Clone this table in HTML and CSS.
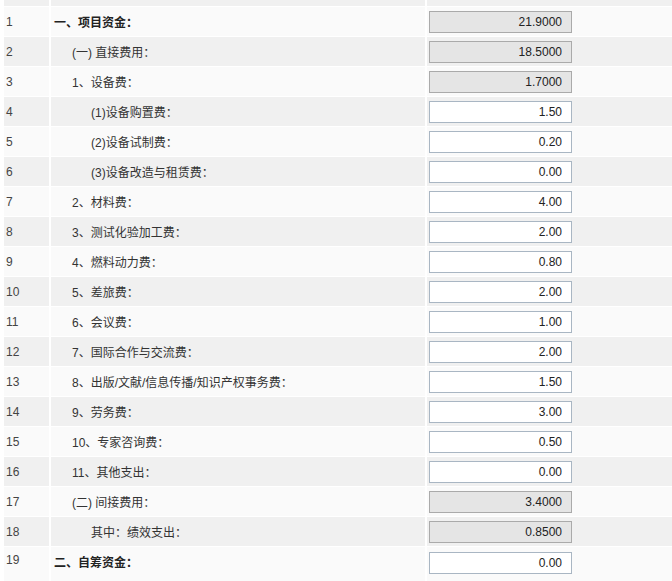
FILE: index.html
```html
<!DOCTYPE html>
<html lang="zh-CN">
<head>
<meta charset="utf-8">
<title>项目资金</title>
<link rel="stylesheet" href="styles.css">
</head>
<body>
<div class="sheet">
  <div class="row row--cut"><div class="cell"></div><div class="cell"></div><div class="cell"></div></div>
  <div class="row"><div class="cell num">1</div><div class="cell label lv0 strong">一、项目资金：</div><div class="cell val"><input class="box ro" readonly value="21.9000"></div></div>
  <div class="row"><div class="cell num">2</div><div class="cell label lv1">(一) 直接费用：</div><div class="cell val"><input class="box ro" readonly value="18.5000"></div></div>
  <div class="row"><div class="cell num">3</div><div class="cell label lv1">1、设备费：</div><div class="cell val"><input class="box ro" readonly value="1.7000"></div></div>
  <div class="row"><div class="cell num">4</div><div class="cell label lv2">(1)设备购置费：</div><div class="cell val"><input class="box" value="1.50"></div></div>
  <div class="row"><div class="cell num">5</div><div class="cell label lv2">(2)设备试制费：</div><div class="cell val"><input class="box" value="0.20"></div></div>
  <div class="row"><div class="cell num">6</div><div class="cell label lv2">(3)设备改造与租赁费：</div><div class="cell val"><input class="box" value="0.00"></div></div>
  <div class="row"><div class="cell num">7</div><div class="cell label lv1">2、材料费：</div><div class="cell val"><input class="box" value="4.00"></div></div>
  <div class="row"><div class="cell num">8</div><div class="cell label lv1">3、测试化验加工费：</div><div class="cell val"><input class="box" value="2.00"></div></div>
  <div class="row"><div class="cell num">9</div><div class="cell label lv1">4、燃料动力费：</div><div class="cell val"><input class="box" value="0.80"></div></div>
  <div class="row"><div class="cell num">10</div><div class="cell label lv1">5、差旅费：</div><div class="cell val"><input class="box" value="2.00"></div></div>
  <div class="row"><div class="cell num">11</div><div class="cell label lv1">6、会议费：</div><div class="cell val"><input class="box" value="1.00"></div></div>
  <div class="row"><div class="cell num">12</div><div class="cell label lv1">7、国际合作与交流费：</div><div class="cell val"><input class="box" value="2.00"></div></div>
  <div class="row"><div class="cell num">13</div><div class="cell label lv1">8、出版/文献/信息传播/知识产权事务费：</div><div class="cell val"><input class="box" value="1.50"></div></div>
  <div class="row"><div class="cell num">14</div><div class="cell label lv1">9、劳务费：</div><div class="cell val"><input class="box" value="3.00"></div></div>
  <div class="row"><div class="cell num">15</div><div class="cell label lv1">10、专家咨询费：</div><div class="cell val"><input class="box" value="0.50"></div></div>
  <div class="row"><div class="cell num">16</div><div class="cell label lv1">11、其他支出：</div><div class="cell val"><input class="box" value="0.00"></div></div>
  <div class="row"><div class="cell num">17</div><div class="cell label lv1">(二) 间接费用：</div><div class="cell val"><input class="box ro" readonly value="3.4000"></div></div>
  <div class="row"><div class="cell num">18</div><div class="cell label lv2">其中：绩效支出：</div><div class="cell val"><input class="box ro" readonly value="0.8500"></div></div>
  <div class="row row--last"><div class="cell num">19</div><div class="cell label lv0 strong">二、自筹资金：</div><div class="cell val"><input class="box" value="0.00"></div></div>
</div>
</body>
</html>
```

FILE: styles.css
```css
html, body {
  margin: 0;
  padding: 0;
  background: #ffffff;
}
body {
  font-family: "Liberation Sans", Arial, "Noto Sans CJK SC", sans-serif;
  font-size: 12px;
  color: #333333;
  overflow: hidden;
}
.sheet {
  margin-left: 4px;
  display: flex;
  flex-direction: column;
}
.row {
  display: grid;
  grid-template-columns: 45px 374px 1fr;
  column-gap: 2px;
  height: 30px;
  border-bottom: 1px solid #ffffff;
  box-sizing: border-box;
}
.row .cell {
  background: #fafafa;
  display: flex;
  align-items: center;
  overflow: hidden;
  white-space: nowrap;
}
.row:nth-child(odd) .cell {
  background: #f0f0f0;
}
.row--cut {
  height: 7px;
}
.row--last {
  height: 40px;
  border-bottom: 0;
}
.row--last .cell {
  align-items: flex-start;
  padding-top: 6px;
}
.row--last .val {
  padding-top: 4px;
}
.num {
  padding-left: 2px;
  color: #444444;
}
.label.lv0 { padding-left: 3px; }
.label.lv1 { padding-left: 21px; }
.label.lv2 { padding-left: 40px; }
.strong {
  font-weight: bold;
  color: #222222;
}
.val {
  padding-left: 2px;
}
.box {
  box-sizing: border-box;
  width: 143px;
  height: 22px;
  margin: 1px 0 0 0;
  padding: 0 9px 0 4px;
  border: 1px solid #a9b6c3;
  background: #ffffff;
  text-align: right;
  font-family: "Liberation Sans", Arial, sans-serif;
  font-size: 12px;
  color: #222222;
  outline: none;
}
.box.ro {
  background: #e5e5e5;
  border-color: #aaaaaa;
}
```
